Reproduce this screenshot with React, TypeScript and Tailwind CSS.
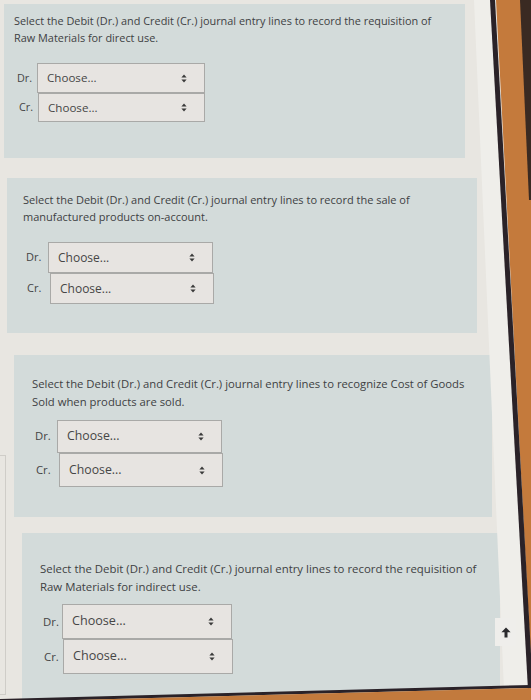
import React from "react";

function Arrows() {
  return (
    <svg width="6" height="9" viewBox="0 0 6 9" className="shrink-0">
      <path d="M3 0.5L5.6 3.6H0.4Z" fill="#3a3a3a" />
      <path d="M3 8.5L0.4 5.4H5.6Z" fill="#3a3a3a" />
    </svg>
  );
}

function Box({ cls }: { cls: string }) {
  return (
    <div className={"flex items-center justify-between border border-[#a9a9a7] bg-[#e7e4e1] pl-[9px] pr-[17px] text-[#464646] " + cls}>
      <span>Choose...</span>
      <Arrows />
    </div>
  );
}

export default function App() {
  return (
    <div className="relative h-[700px] w-[531px] overflow-hidden bg-[#e8e6e1] font-['Open_Sans',sans-serif] text-[#3e4143]">
      <div className="flex flex-col">
        {/* Panel 1 */}
        <div className="ml-[4px] mt-[4px] h-[154px] w-[461px] bg-[#d3dbda] pl-[10px] pt-[8px]">
          <p className="text-[10.9px] leading-[17px]">
            Select the Debit (Dr.) and Credit (Cr.) journal entry lines to record the requisition of
            <br />
            Raw Materials for direct use.
          </p>
          <div className="ml-[3px] mt-[17px] flex flex-col">
            <div className="flex items-center">
              <span className="w-[20px] text-[10.8px] text-[#444]">Dr.</span>
              <Box cls="h-[30px] w-[168px] text-[11.6px]" />
            </div>
            <div className="flex items-center">
              <span className="w-[21px] pl-[2px] text-[10.8px] text-[#444]">Cr.</span>
              <Box cls="h-[29px] w-[167px] text-[11.6px]" />
            </div>
          </div>
        </div>

        {/* Panel 2 */}
        <div className="ml-[7px] mt-[20px] h-[155px] w-[470px] bg-[#d3dbda] pl-[16px] pt-[13px]">
          <p className="text-[11px] leading-[17px]">
            Select the Debit (Dr.) and Credit (Cr.) journal entry lines to record the sale of
            <br />
            manufactured products on-account.
          </p>
          <div className="ml-[3px] mt-[17px] flex flex-col">
            <div className="flex items-center">
              <span className="w-[22px] text-[11px] text-[#444]">Dr.</span>
              <Box cls="h-[31px] w-[165px] text-[12px]" />
            </div>
            <div className="flex items-center">
              <span className="w-[24px] pl-[1px] text-[11px] text-[#444]">Cr.</span>
              <Box cls="h-[31px] w-[164px] text-[12px]" />
            </div>
          </div>
        </div>

        {/* Panel 3 */}
        <div className="ml-[14px] mt-[22px] h-[162px] w-[478px] bg-[#d3dbda] pl-[18px] pt-[20px]">
          <p className="text-[11.3px] leading-[17.5px]">
            Select the Debit (Dr.) and Credit (Cr.) journal entry lines to recognize Cost of Goods
            <br />
            Sold when products are sold.
          </p>
          <div className="ml-[3px] mt-[10px] flex flex-col">
            <div className="flex items-center">
              <span className="w-[22px] text-[11.3px] text-[#444]">Dr.</span>
              <Box cls="h-[33px] w-[165px] text-[12.3px]" />
            </div>
            <div className="flex items-center">
              <span className="w-[24px] pl-[1px] text-[11.3px] text-[#444]">Cr.</span>
              <Box cls="h-[34px] w-[164px] text-[12.3px]" />
            </div>
          </div>
        </div>

        {/* Panel 4 */}
        <div className="ml-[22px] mt-[16px] h-[167px] w-[478px] bg-[#d3dbda] pl-[18px] pt-[27px]">
          <p className="text-[11.4px] leading-[18px]">
            Select the Debit (Dr.) and Credit (Cr.) journal entry lines to record the requisition of
            <br />
            Raw Materials for indirect use.
          </p>
          <div className="ml-[3px] mt-[8px] flex flex-col">
            <div className="flex items-center">
              <span className="w-[19px] text-[11.4px] text-[#444]">Dr.</span>
              <Box cls="h-[35px] w-[170px] text-[12.6px]" />
            </div>
            <div className="flex items-center">
              <span className="w-[20px] pl-[1px] text-[11.4px] text-[#444]">Cr.</span>
              <Box cls="h-[35px] w-[170px] text-[12.6px]" />
            </div>
          </div>
        </div>
      </div>

      {/* faint left edge box */}
      <div className="absolute left-0 top-[455px] h-[240px] w-[6px] border border-l-0 border-[#cfcdc8]" />

      {/* photo frame: device edge */}
      <svg className="pointer-events-none absolute left-0 top-0" width="531" height="700" viewBox="0 0 531 700">
        <polygon points="474,0 490,0 528,690 504,690" fill="#efeeea" />
        <polygon points="496,0 531,0 531,700 533,700" fill="#c47a3c" />
        <polygon points="520,0 531,0 531,200 529,200" fill="#3a2a22" />
        <polygon points="490,0 495,0 533,690 528,690" fill="#2a2228" />
        <polygon points="0,699 531,685 531,688 0,702" fill="#2a2228" />
        <polygon points="0,702 531,688 531,700 0,700" fill="#c27a3d" />
      </svg>

      {/* scroll-to-top button */}
      <div className="absolute left-[495px] top-[618px] flex h-[28px] w-[21px] items-center justify-center bg-[#efeeeb]">
        <svg width="10" height="11" viewBox="0 0 10 11">
          <path d="M5 0.5L9.6 5.2H6.5V10.5H3.5V5.2H0.4Z" fill="#2b2b2e" />
        </svg>
      </div>
    </div>
  );
}
